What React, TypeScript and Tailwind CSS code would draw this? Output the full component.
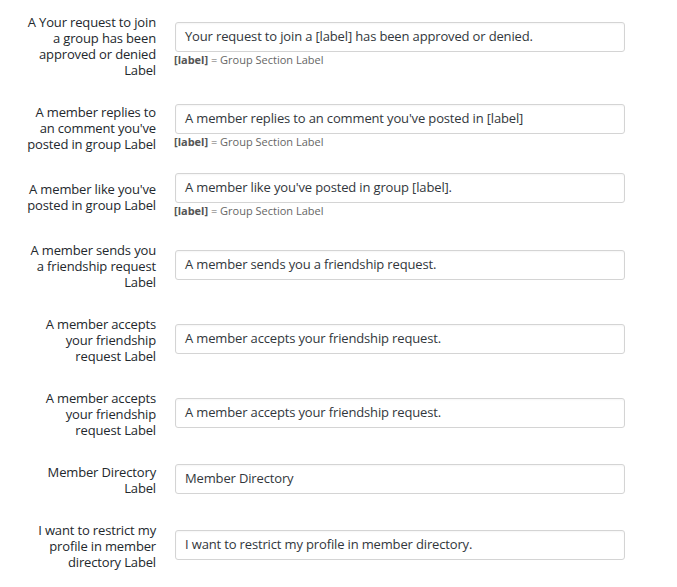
import React from "react";

type Row = { label: string; value: string; help?: boolean };

const rows: Row[] = [
  { label: "A Your request to join a group has been approved or denied Label", value: "Your request to join a [label] has been approved or denied.", help: true },
  { label: "A member replies to an comment you've posted in group Label", value: "A member replies to an comment you've posted in [label]", help: true },
  { label: "A member like you've posted in group Label", value: "A member like you've posted in group [label].", help: true },
  { label: "A member sends you a friendship request Label", value: "A member sends you a friendship request." },
  { label: "A member accepts your friendship request Label", value: "A member accepts your friendship request." },
  { label: "A member accepts your friendship request Label", value: "A member accepts your friendship request." },
  { label: "Member Directory Label", value: "Member Directory" },
  { label: "I want to restrict my profile in member directory Label", value: "I want to restrict my profile in member directory." },
];

export default function App() {
  return (
    <div
      className="w-[677px] h-[587px] bg-white overflow-hidden"
      style={{ fontFamily: '"Open Sans", "Liberation Sans", sans-serif' }}
    >
      {rows.map((r, i) => (
        <div key={i} className="flex items-center">
          <div className="w-[156px] shrink-0 pt-[14px] pb-[12px] pl-[23px] text-right text-[13px] leading-[16px] tracking-[-0.15px] text-[#23282d]">
            {r.label}
          </div>
          <div className="ml-[19px] py-[9px]">
            <div className="w-[450px] h-[30px] border border-[#d4d4d4] rounded-[3px] px-[9px] flex items-center text-[13px] tracking-[-0.15px] text-[#32373c] shadow-[inset_0_1px_2px_rgba(0,0,0,0.04)]">
              {r.value}
            </div>
            {r.help && (
              <div className="text-[11px] leading-[16px] text-[#666] -ml-px">
                <span className="font-bold text-[#555]">[label]</span> = Group Section Label
              </div>
            )}
          </div>
        </div>
      ))}
    </div>
  );
}
